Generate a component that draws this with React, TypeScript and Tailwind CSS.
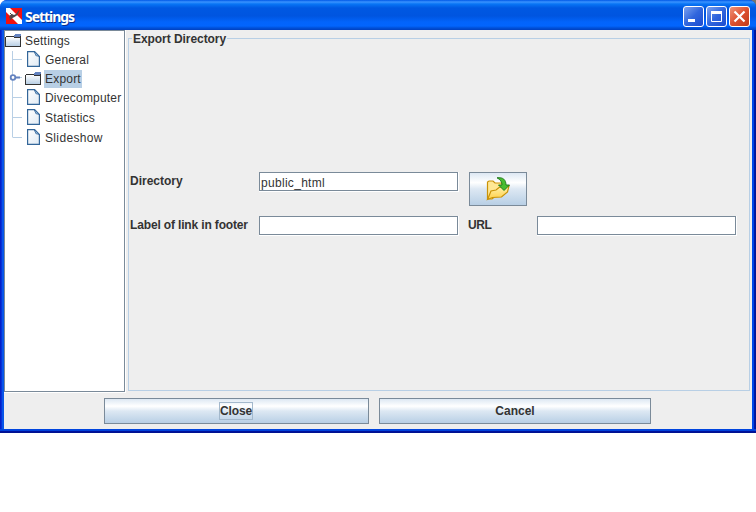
import type { ReactNode } from "react";

function FolderIcon() {
  return (
    <svg width="16" height="13" viewBox="0 0 16 13" shapeRendering="crispEdges" className="mb-[1px] shrink-0">
      <defs>
        <linearGradient id="folder" x1="0" y1="0" x2="0" y2="1">
          <stop offset="0" stopColor="#ffffff" />
          <stop offset="1" stopColor="#b8cfe5" />
        </linearGradient>
      </defs>
      <path d="M1 3h8v1h6v8H1z" fill="url(#folder)" />
      <path d="M0 3h1v10H0zM1 2h8v1H1zM9 3h6v1H9zM15 2h1v11h-1zM0 12h16v1H0z" fill="#333" />
      <path d="M10 0h6v2h-1v1H9V1h1z" fill="#6382bf" />
    </svg>
  );
}

function FileIcon() {
  return (
    <svg width="13" height="16" viewBox="0 0 13 16" className="mb-[2px] shrink-0">
      <defs>
        <linearGradient id="sheet" x1="0" y1="0" x2="1" y2="1">
          <stop offset="0" stopColor="#ffffff" />
          <stop offset="1" stopColor="#dfeaf4" />
        </linearGradient>
      </defs>
      <path d="M.6.6h7l4.800 4.900v9.900H.6z" fill="url(#sheet)" stroke="#336699" strokeWidth="1.200" />
      <path d="M7.500.5v1.500l1 1v1l1 1h1.500l1.500.5z" fill="#8fb4d6" stroke="#336699" strokeWidth=".8" />
    </svg>
  );
}

function Branch({ mid, height, last, handle }: { mid: number; height: number; last?: boolean; handle?: boolean }) {
  return (
    <svg width="22" height={height} viewBox={`0 0 22 ${height}`} className="shrink-0">
      <path d={`M7.5 0V${last ? mid + 0.5 : height}M8 ${mid + 0.5}H17`} stroke="#b8cfe5" fill="none" />
      {handle && (
        <>
          <path d={`M10 ${mid + 0.5}h5`} stroke="#6382bf" strokeWidth="2" />
          <circle cx="8" cy={mid + 0.5} r="2.3" fill="#fff" stroke="#6382bf" strokeWidth="1.8" />
        </>
      )}
    </svg>
  );
}

function TitleButton({ close, children }: { close?: boolean; children: ReactNode }) {
  return (
    <div
      className={`h-[21px] w-[21px] rounded-[3px] border border-white ${
        close
          ? "bg-linear-to-br from-[#ee9176] via-[#dd5130] to-[#c03a18]"
          : "bg-linear-to-br from-[#7ba0ee] via-[#3166dd] to-[#1c4bd0]"
      }`}
    >
      <svg width="19" height="19" viewBox="0 0 19 19">
        {children}
      </svg>
    </div>
  );
}

function Field({ value, className }: { value?: string; className: string }) {
  return (
    <div className={`h-[20px] border-r border-b border-white ${className}`}>
      <div className="h-[19px] border border-[#7a8a99] bg-white pl-[1px] text-[12px] leading-[20px] tracking-[0.3px]">
        {value}
      </div>
    </div>
  );
}

const metal = "border border-[#7a8a99] bg-[linear-gradient(180deg,#dde8f3_0%,#ffffff_30%,#dde8f3_50%,#b8cfe5_100%)]";

export default function App() {
  return (
    <div className="h-[512px] w-[756px] overflow-hidden bg-white font-['Liberation_Sans',Arial,sans-serif] text-[12px] whitespace-nowrap text-[#333]">
      <div className="h-[433px] bg-[linear-gradient(90deg,#fff_0,#fff_50%,#77756c_50%)]">
        <div className="flex h-[433px] flex-col overflow-hidden rounded-t-[7px] bg-[#0831d9]">
          <header className="flex h-[30px] shrink-0 bg-[linear-gradient(180deg,#0058e6_0px,#3a93ff_2px,#0875f5_4px,#0058e2_8px,#0055e0_16px,#0264fb_22px,#0265fd_26px,#0050d8_28px,#0040c0_30px)] pl-[6px] pr-[6px] pt-[6px]">
            <svg width="16" height="16" viewBox="0 0 16 16" className="mt-[2px]">
              <path d="M0 0h16v16H0z" fill="#f21010" />
              <path d="M0 0h4l12 12v4h-4L0 4z" fill="#fff" />
              <path d="M3 8l3-2 2 1 2-1 3-4 .5.500-2 4.500-3 2-2 1-2 2-1-.5 1.500-2z" fill="#514747" />
              <path d="M4 5l2 2M5 9l-2 1" stroke="#514747" fill="none" />
            </svg>
            <h1 className="ml-[3px] text-[14px] leading-[22px] font-bold tracking-[-1.05px] text-white [font-family:'Noto_Sans',sans-serif] [text-shadow:1px_1px_0_#0a2f8c]">
              Settings
            </h1>
            <div className="ml-auto flex gap-[2px]">
              <TitleButton>
                <path d="M4 12h7v3H4z" fill="#fff" />
              </TitleButton>
              <TitleButton>
                <path d="M4.500 5h10v9.500h-10z" fill="none" stroke="#fff" />
                <path d="M4 4h11v3H4z" fill="#fff" />
              </TitleButton>
              <TitleButton close>
                <path d="M4.500 4.500l10 10m0-10l-10 10" stroke="#fff" strokeWidth="2.200" />
              </TitleButton>
            </div>
          </header>

          <div className="h-[403px] bg-[linear-gradient(180deg,transparent_399px,#0046e0_399px,#0040d8_401px,#0010a0_401px,#00128c_403px),linear-gradient(90deg,#0010b8_0,#0831d9_1px,#0831d9_2px,#0855e8_2px,#0855e8_4px,transparent_4px,transparent_752px,#0046e8_752px,#0046e8_754px,#0019b0_754px,#00138c_756px)] px-[4px] pb-[4px]">
            <div className="h-[399px] bg-[#eee]">
              <div className="flex h-[363px]">
                <nav className="h-[363px] w-[122px] border-r border-b border-white">
                  <div className="h-[362px] border border-[#7a8a99] bg-white text-[12px] tracking-[0.2px]">
                    <div className="flex h-[20px] items-center">
                      <FolderIcon />
                      <span className="ml-[4px]">Settings</span>
                    </div>
                    <div className="flex h-[18px] items-center">
                      <Branch mid={8} height={18} />
                      <FileIcon />
                      <span className="ml-[5px]">General</span>
                    </div>
                    <div className="flex h-[19px] items-center">
                      <Branch mid={8} height={19} handle />
                      <span className="-ml-[2px] flex">
                        <FolderIcon />
                      </span>
                      <span className="ml-[3px] h-[18px] w-[38px] bg-[#b8cfe5] px-[1px] leading-[18px]">Export</span>
                    </div>
                    <div className="flex h-[20px] items-center">
                      <Branch mid={9} height={20} />
                      <FileIcon />
                      <span className="ml-[5px]">Divecomputer</span>
                    </div>
                    <div className="flex h-[19px] items-center">
                      <Branch mid={9} height={19} />
                      <FileIcon />
                      <span className="ml-[5px]">Statistics</span>
                    </div>
                    <div className="flex h-[21px] items-center">
                      <Branch mid={10} height={21} last />
                      <FileIcon />
                      <span className="ml-[5px] tracking-[0.35px]">Slideshow</span>
                    </div>
                  </div>
                </nav>

                <fieldset className="ml-[2px] mt-[1px] h-[360px] w-[622px] border border-[#b8cfe5] px-[1px]">
                  <legend className="ml-[2px] h-[15px] px-[1px] text-[12px] leading-[17px] font-bold tracking-[-0.06px]">
                    Export Directory
                  </legend>
                  <div className="mt-[126px] flex h-[34px] font-bold">
                    <span className="w-[129px] leading-[18px]">Directory</span>
                    <Field value="public_html" className="w-[200px] font-normal" />
                    <div className={`ml-[10px] flex h-[34px] w-[58px] items-center justify-center ${metal}`}>
                      <svg width="24" height="24" viewBox="0 0 24 24">
                        <defs>
                          <linearGradient id="openFolder" x1="0" y1="0" x2="0" y2="1">
                            <stop offset="0" stopColor="#fff2b0" />
                            <stop offset="1" stopColor="#ffcf45" />
                          </linearGradient>
                        </defs>
                        <path d="M1.500 22V5l1.500-1h4l2 2h7l1 3v4L6 22z" fill="#ffe794" stroke="#c99208" strokeWidth="1.200" />
                        <path
                          d="M1.500 22.500L5 14l5-1 3-2.500 10-1.500-1.500 6-6 5-9 .5z"
                          fill="url(#openFolder)"
                          stroke="#c99208"
                          strokeWidth="1.200"
                        />
                        <path
                          d="M11 .8c6-.8 9 2 9 7.200h3.500L18 13.500 12.500 8H16c0-3-1.500-5.500-5-7.200z"
                          fill="#48bd30"
                          stroke="#187414"
                          strokeWidth=".9"
                        />
                      </svg>
                    </div>
                  </div>
                  <div className="mt-[10px] flex h-[20px] font-bold">
                    <span className="w-[129px] leading-[18px] tracking-[-0.15px]">Label of link in footer</span>
                    <Field className="w-[200px]" />
                    <span className="ml-[9px] w-[69px] leading-[18px] tracking-[-0.4px]">URL</span>
                    <Field className="w-[200px]" />
                  </div>
                </fieldset>
              </div>

              <div className="flex gap-[10px] pl-[100px] pt-[5px] font-bold">
                <div className={`flex h-[26px] w-[265px] items-center justify-center pr-[1px] ${metal}`}>
                  <span className="h-[18px] w-[34px] border border-[#a3b8cc] leading-[17px] tracking-[-0.15px]">Close</span>
                </div>
                <div className={`flex h-[26px] w-[272px] items-center justify-center ${metal}`}>Cancel</div>
              </div>
            </div>
          </div>
        </div>
      </div>
    </div>
  );
}
